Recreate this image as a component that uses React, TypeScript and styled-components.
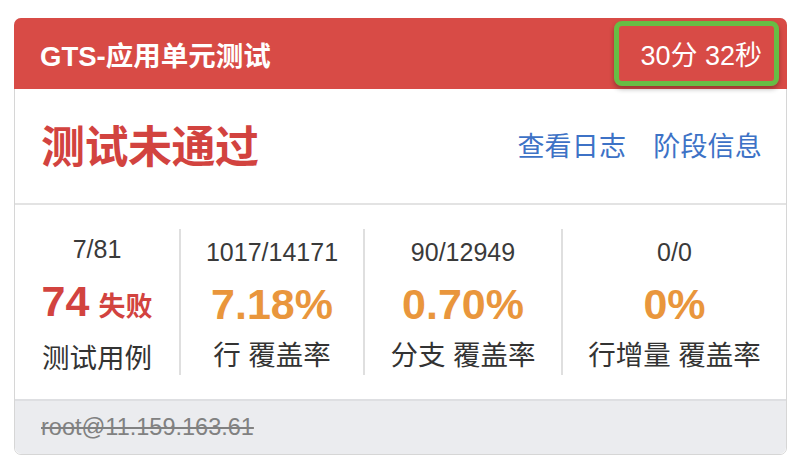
import React from "react";
import styled, { createGlobalStyle } from "styled-components";

const Global = createGlobalStyle`
  html, body { margin: 0; padding: 0; background: #ffffff; }
  body { font-family: "Liberation Sans", "Noto Sans CJK SC", sans-serif; }
  * { box-sizing: border-box; }
`;

const Page = styled.div`
  width: 798px;
  height: 468px;
  padding: 18px 11px 13px 14px;
`;

const Card = styled.div`
  border: 1px solid #d6d6d6;
  border-radius: 7px;
  display: flex;
  flex-direction: column;
  height: 437px;
`;

const Header = styled.div`
  height: 71px;
  background: #d84b46;
  border-radius: 7px 7px 0 0;
  margin: -1px -1px 0 -1px;
  display: flex;
  align-items: center;
  justify-content: space-between;
  padding: 0 8px 0 26px;
  color: #ffffff;
`;

const HeaderTitle = styled.div`
  font-size: 27.5px;
  font-weight: 700;
  padding-top: 1px;
`;

const Duration = styled.div`
  height: 65px;
  border: 5px solid #67bd44;
  border-radius: 8px;
  box-shadow: 0 3px 5px rgba(0, 0, 0, 0.3);
  display: flex;
  align-items: center;
  padding: 0 12px 0 21px;
  font-size: 27px;
  font-weight: 400;
`;

const TitleRow = styled.div`
  height: 116px;
  display: flex;
  align-items: center;
  justify-content: space-between;
  padding: 0 24px 0 26px;
  border-bottom: 2px solid #e3e3e3;
`;

const Status = styled.div`
  font-size: 44px;
  font-weight: 700;
  color: #d2433f;
  letter-spacing: -0.5px;
  padding-bottom: 4px;
`;

const Links = styled.div`
  display: flex;
  gap: 27px;
  padding-bottom: 4px;
`;

const LinkText = styled.a`
  font-size: 27px;
  color: #3d72c6;
  text-decoration: none;
  letter-spacing: 0.2px;
`;

const Stats = styled.div`
  flex: 1;
  display: grid;
  grid-template-columns: 164px 184px 198px 1fr;
  align-items: center;
`;

const StatCol = styled.div<{ $divider?: boolean }>`
  height: 146px;
  padding-top: 4px;
  display: flex;
  flex-direction: column;
  align-items: center;
  justify-content: center;
  border-left: ${(p) => (p.$divider ? "2px solid #dfdfdf" : "none")};
  color: #333333;
`;

const Ratio = styled.div`
  font-size: 25px;
  line-height: 44px;
  color: #3a3a3a;
  flex-shrink: 0;
`;

const BigValue = styled.div<{ $color: string }>`
  font-size: 43px;
  font-weight: 700;
  line-height: 60px;
  color: ${(p) => p.$color};
  display: flex;
  align-items: baseline;
  gap: 9px;
  flex-shrink: 0;
`;

const Suffix = styled.span`
  font-size: 27px;
  font-weight: 700;
`;

const Label = styled.div`
  font-size: 27.5px;
  line-height: 44px;
  color: #333333;
  flex-shrink: 0;
`;

const Footer = styled.div`
  height: 55px;
  background: #ebecef;
  border-top: 2px solid #dedfe2;
  border-radius: 0 0 7px 7px;
  display: flex;
  align-items: center;
  padding: 0 26px;
`;

const Host = styled.span`
  font-size: 23.5px;
  color: #818181;
  text-decoration: line-through;
  text-decoration-thickness: 2px;
`;

type Stat = { ratio: string; value: string; suffix?: string; color: string; label: string };

const stats: Stat[] = [
  { ratio: "7/81", value: "74", suffix: "失败", color: "#d2433f", label: "测试用例" },
  { ratio: "1017/14171", value: "7.18%", color: "#e9963c", label: "行 覆盖率" },
  { ratio: "90/12949", value: "0.70%", color: "#e9963c", label: "分支 覆盖率" },
  { ratio: "0/0", value: "0%", color: "#e9963c", label: "行增量 覆盖率" },
];

export default function App() {
  return (
    <>
      <Global />
      <Page>
        <Card>
          <Header>
            <HeaderTitle>GTS-应用单元测试</HeaderTitle>
            <Duration>30分 32秒</Duration>
          </Header>
          <TitleRow>
            <Status>测试未通过</Status>
            <Links>
              <LinkText href="#">查看日志</LinkText>
              <LinkText href="#">阶段信息</LinkText>
            </Links>
          </TitleRow>
          <Stats>
            {stats.map((s, i) => (
              <StatCol key={s.label} $divider={i > 0}>
                <Ratio>{s.ratio}</Ratio>
                <BigValue $color={s.color}>
                  {s.value}
                  {s.suffix && <Suffix>{s.suffix}</Suffix>}
                </BigValue>
                <Label>{s.label}</Label>
              </StatCol>
            ))}
          </Stats>
          <Footer>
            <Host>root@11.159.163.61</Host>
          </Footer>
        </Card>
      </Page>
    </>
  );
}
